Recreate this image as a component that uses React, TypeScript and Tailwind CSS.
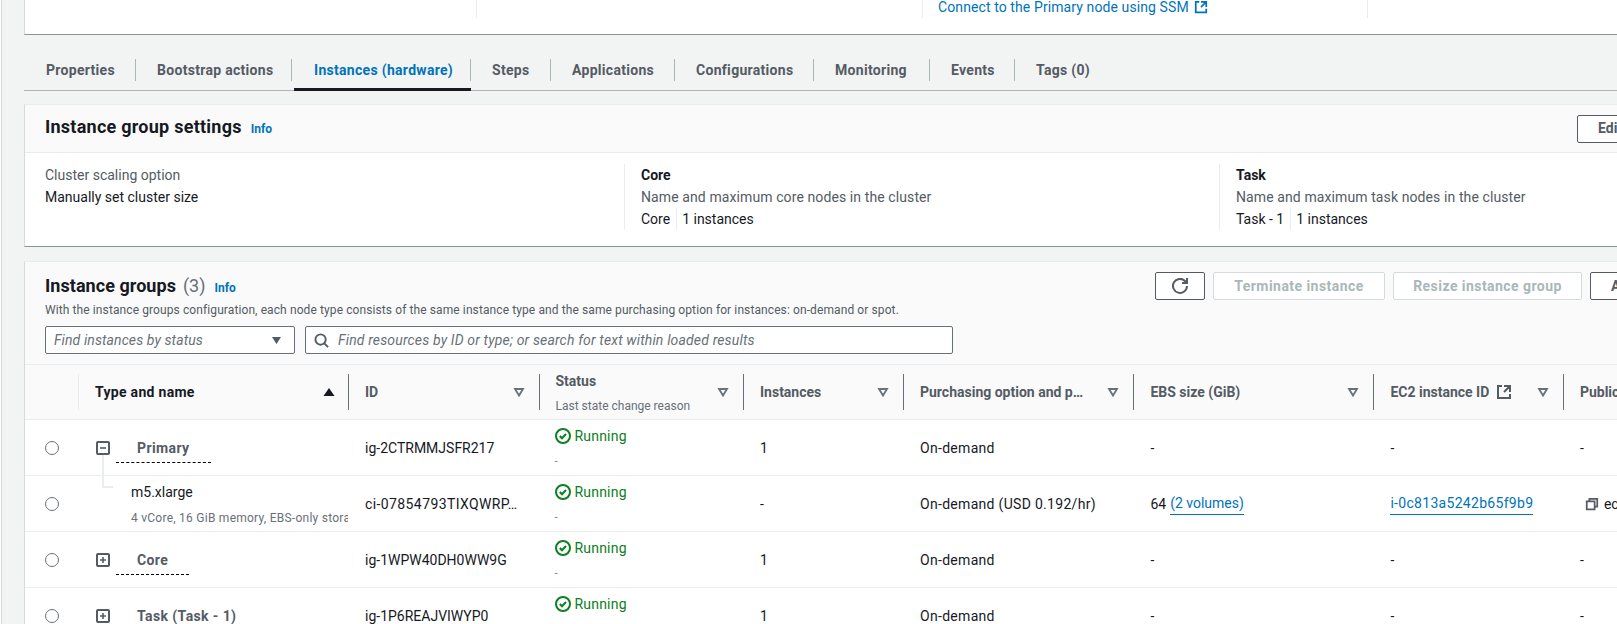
const External = ({ className = "" }: { className?: string }) => (
  <svg viewBox="0 0 16 16" fill="none" stroke="currentColor" strokeWidth="2" className={className}>
    <path d="M14 8.01v-6H8M14.02 2 8 8.01M6 2.01H2v12h12v-3.99" />
  </svg>
);
const SortIcon = () => (
  <svg viewBox="0 0 12 12" className="w-[12px] h-[12px] shrink-0 text-[#687078]" fill="none" stroke="currentColor" strokeWidth="1.8">
    <path d="M2 3h8L6 9.5z" />
  </svg>
);
const Head = ({ children, sub }: { children: React.ReactNode; sub?: string }) => (
  <div className="flex items-center h-[36px] border-l border-[#687078] pl-[16px] pr-[14px] justify-between">
    <div className="flex flex-col whitespace-nowrap">
      <div className="text-[14px] leading-[22px] font-bold text-[#545b64] flex items-center">{children}</div>
      {sub && <div className="text-[12px] leading-[16px] text-[#687078] mt-[6px]">{sub}</div>}
    </div>
    <SortIcon />
  </div>
);
const Radio = () => <div className="w-[14px] h-[14px] rounded-full border border-[#687078] bg-white" />;
const Running = () => (
  <div className="pl-[16px] pt-[5px]">
    <div className="flex items-center gap-[4px] h-[22px] text-[#0a8020] text-[14px] tracking-[0.2px]">
      <svg viewBox="0 0 16 16" className="w-[16px] h-[16px]" fill="none" stroke="currentColor" strokeWidth="2">
        <circle cx="8" cy="8" r="7" />
        <path d="M4.8 8l2.2 2.2 4-4.2" />
      </svg>
      <span>Running</span>
    </div>
    <div className="text-[12px] leading-[16px] text-[#879596] mt-[6px]">-</div>
  </div>
);
const Expand = ({ open }: { open?: boolean }) => (
  <svg viewBox="0 0 14 14" className="w-[14px] h-[14px] shrink-0 text-[#545b64]" fill="none" stroke="currentColor" strokeWidth="2">
    <rect x="1" y="1" width="12" height="12" rx="1" />
    <path d={open ? "M4 7h6" : "M4 7h6M7 4v6"} strokeWidth="1.6" />
  </svg>
);
const Name = ({ children, line = true }: { children: string; line?: boolean }) => (
  <div className={`text-[14px] leading-[22px] font-bold tracking-[0.4px] text-[#545b64] px-[21px] pb-[3px] w-fit whitespace-nowrap ${line ? "border-b border-dashed border-black" : ""}`}>
    {children}
  </div>
);
const Cell = ({ children }: { children: React.ReactNode }) => (
  <div className="flex items-center pl-[17px] pt-[1px] whitespace-nowrap text-[14px] text-[#16191f] overflow-hidden">{children}</div>
);
const rows = [
  { name: "Primary", id: "ig-2CTRMMJSFR217", open: true, line: true },
  { name: "Core", id: "ig-1WPW40DH0WW9G", open: false, line: true },
  { name: "Task (Task - 1)", id: "ig-1P6REAJVIWYP0", open: false, line: false },
];
const tabs = [
  ["Properties", "w-[112px] pl-px", false],
  ["Bootstrap actions", "w-[156px]", false],
  ["Instances (hardware)", "w-[177px] ml-[2px]", true],
  ["Steps", "w-[80px]", false],
  ["Applications", "w-[124px]", false],
  ["Configurations", "w-[139px]", false],
  ["Monitoring", "w-[116px]", false],
  ["Events", "w-[85px]", false],
  ["Tags (0)", "w-[100px]", false],
] as const;
const gridCols = "grid grid-cols-[53px_270px_190.5px_204.5px_160px_230.4px_240px_189.5px_200px]";

const GroupRow = ({ r }: { r: (typeof rows)[number] }) => (
  <div className={`${gridCols} h-[56px] border-b border-[#eaeded] bg-white`}>
    <div className="flex items-center pl-[20px]"><Radio /></div>
    <div className="relative flex items-start pl-[18px] pt-[21px]">
      <Expand open={r.open} />
      <div className="ml-[6px] -mt-[4px]"><Name line={r.line}>{r.name}</Name></div>
      {r.open && <div className="absolute left-[24px] top-[35px] h-[33px] w-[11px] border-l-2 border-b-2 border-[#eaeded] rounded-bl-[2px]" />}
    </div>
    <Cell>{r.id}</Cell>
    <Running />
    <Cell>1</Cell>
    <Cell><span className="tracking-[0.3px]">On-demand</span></Cell>
    <Cell>-</Cell>
    <Cell>-</Cell>
    <Cell>-</Cell>
  </div>
);

export default function App() {
  return (
    <div className="h-[624px] w-[1617px] overflow-hidden bg-white pl-px [font-family:Roboto,sans-serif] text-[#16191f]">
      <div className="h-[624px] w-[1640px] bg-[#f2f3f3] border-l border-[#d5dbdb] pl-[22px]">
        {/* top card */}
        <div className="h-[35px] w-[1620px] bg-white border-b border-[#879596] border-l-[#d5dbdb] border-l grid grid-cols-[451px_446px_445px_278px]">
          <div />
          <div className="h-[18px] border-l border-[#eaeded]" />
          <div className="h-[18px] border-l border-[#eaeded] pl-[15px]">
            <div className="flex items-center gap-[5px] h-[14px] text-[14px] tracking-[0.1px] text-[#0073bb] whitespace-nowrap">
              Connect to the Primary node using SSM
              <External className="w-[14px] h-[14px]" />
            </div>
          </div>
          <div className="h-[18px] border-l border-[#eaeded]" />
        </div>

        {/* tabs */}
        <div className="mt-[20px] h-[36px] w-[1620px] border-b border-[#aab7b8] flex">
          {tabs.map(([label, w, active]) => (
            <div key={label} className={`${w} h-[36px] pt-[4px] ${active ? "border-b-[3px] border-[#16191f]" : ""}`}>
              <div className={`h-[22px] flex items-center whitespace-nowrap text-[14px] font-bold tracking-[0.3px] ${active ? "pl-[20px]" : "pl-[21px]"} ${label === "Tags (0)" ? "" : "border-r border-[#aab7b8]"} ${active ? "text-[#0073bb]" : "text-[#545b64]"}`}>
                {label}
              </div>
            </div>
          ))}
        </div>

        {/* settings card */}
        <div className="mt-[13px] h-[143px] w-[1620px] bg-white border-l border-[#d5dbdb] border-b border-b-[#879596] border-t border-t-[#eaeded]">
          <div className="h-[48px] bg-[#fafafa] border-b border-[#eaeded] flex items-center pl-[20px]">
            <div className="text-[18px] font-bold tracking-[0.25px] w-[1532px] flex items-baseline pb-[4px]">
              Instance group settings
              <span className="text-[12px] tracking-normal text-[#0073bb] ml-[9px]">Info</span>
            </div>
            <div className="h-[28px] w-[60px] border border-[#545b64] rounded-[2px] bg-white text-[14px] font-bold text-[#545b64] pl-[20px] flex items-center">Edit</div>
          </div>
          <div className="grid grid-cols-[599px_595px_1fr] pt-[11px] text-[14px] leading-[22px]">
            <div className="pl-[20px] h-[66px]">
              <div className="text-[#545b64]">Cluster scaling option</div>
              <div>Manually set cluster size</div>
            </div>
            <div className="pl-[16px] h-[66px] border-l border-[#eaeded]">
              <div className="font-bold">Core</div>
              <div className="text-[#545b64] tracking-[0.1px]">Name and maximum core nodes in the cluster</div>
              <div className="flex"><span className="pr-[6px] border-r border-[#eaeded]">Core</span><span className="pl-[5px]">1 instances</span></div>
            </div>
            <div className="pl-[16px] h-[66px] border-l border-[#eaeded]">
              <div className="font-bold">Task</div>
              <div className="text-[#545b64] tracking-[0.1px]">Name and maximum task nodes in the cluster</div>
              <div className="flex"><span className="pr-[6px] border-r border-[#eaeded]">Task - 1</span><span className="pl-[5px]">1 instances</span></div>
            </div>
          </div>
        </div>

        {/* instance groups */}
        <div className="mt-[14px] w-[1620px] border-l border-[#d5dbdb] border-t border-t-[#eaeded]">
          <div className="bg-[#fafafa] h-[102px] pt-[10px] pl-[20px]">
            <div className="flex h-[28px]">
              <div className="w-[1110px] shrink-0 flex items-baseline">
                <span className="text-[18px] font-bold tracking-[0.05px]">Instance groups</span>
                <span className="text-[18px] text-[#687078] ml-[7px]">(3)</span>
                <span className="text-[12px] font-bold text-[#0073bb] ml-[9px]">Info</span>
              </div>
              <div className="flex gap-[8px] shrink-0">
                <div className="w-[50px] h-[28px] bg-white border border-[#545b64] rounded-[2px] flex items-center justify-center text-[#545b64]">
                  <svg viewBox="0 0 16 16" className="w-[16px] h-[16px]" fill="none" stroke="currentColor" strokeWidth="2">
                    <path d="M10 5h5V0" />
                    <path d="M15 8a7 7 0 1 1-2-5l2 2" />
                  </svg>
                </div>
                <div className="w-[172px] h-[28px] bg-white border border-[#d5dbdb] rounded-[2px] flex items-center justify-center text-[14px] font-bold tracking-[0.45px] text-[#aab7b8] whitespace-nowrap">Terminate instance</div>
                <div className="w-[189px] h-[28px] bg-white border border-[#d5dbdb] rounded-[2px] flex items-center justify-center text-[14px] font-bold tracking-[0.45px] text-[#aab7b8] whitespace-nowrap">Resize instance group</div>
                <div className="w-[80px] h-[28px] bg-white border border-[#545b64] rounded-[2px] flex items-center pl-[20px] text-[14px] font-bold text-[#545b64]">Actions</div>
              </div>
            </div>
            <div className="text-[12px] leading-[16px] tracking-[0.1px] text-[#545b64] mt-[2px] whitespace-nowrap">
              With the instance groups configuration, each node type consists of the same instance type and the same purchasing option for instances: on-demand or spot.
            </div>
            <div className="flex gap-[10px] mt-[8px]">
              <div className="w-[250px] h-[28px] bg-white border border-[#687078] rounded-[2px] flex items-center justify-between pl-[8px] pr-[12px] text-[14px] tracking-[0.1px] italic text-[#687078]">
                Find instances by status
                <svg viewBox="0 0 12 10" className="w-[11px] h-[9px] text-[#545b64]" fill="currentColor"><path d="M1 1h10L6 9z" /></svg>
              </div>
              <div className="w-[648px] h-[28px] bg-white border border-[#687078] rounded-[2px] flex items-center pl-[8px] text-[14px] tracking-[0.16px] italic text-[#687078]">
                <svg viewBox="0 0 16 16" className="w-[15px] h-[15px] text-[#545b64] mr-[9px]" fill="none" stroke="currentColor" strokeWidth="2"><circle cx="7" cy="7" r="5.5" /><path d="M11 11l4 4" /></svg>
                Find resources by ID or type; or search for text within loaded results
              </div>
            </div>
          </div>

          {/* header */}
          <div className={`${gridCols} h-[56px] items-center bg-[#fafafa] border-t border-b border-[#eaeded]`}>
            <div />
            <div className="flex items-center h-[36px] border-l border-[#eaeded] pl-[16px] pr-[13px] justify-between">
              <span className="text-[14px] font-bold tracking-[0.3px] text-[#16191f]">Type and name</span>
              <svg viewBox="0 0 12 12" className="w-[12px] h-[12px] text-[#16191f]" fill="currentColor"><path d="M6 2l5.5 8H.5z" /></svg>
            </div>
            <Head>ID</Head>
            <Head sub="Last state change reason">Status</Head>
            <Head>Instances</Head>
            <Head>Purchasing option and p…</Head>
            <Head>EBS size (GiB)</Head>
            <Head>EC2 instance ID<External className="w-[16px] h-[16px] ml-[7px]" /></Head>
            <Head>Public IPv4</Head>
          </div>

          {/* rows */}
          <GroupRow r={rows[0]} />
          <div className={`${gridCols} h-[56px] border-b border-[#eaeded] bg-white`}>
            <div className="flex items-center pl-[20px]"><Radio /></div>
            <div className="pl-[53px] pt-[5px] overflow-hidden whitespace-nowrap">
              <div className="text-[14px] leading-[22px]">m5.xlarge</div>
              <div className="text-[12px] leading-[16px] tracking-[0.25px] mt-[7px] text-[#687078]">4 vCore, 16 GiB memory, EBS-only storage</div>
            </div>
            <Cell><span className="tracking-[0.4px]">ci-07854793TIXQWRP…</span></Cell>
            <Running />
            <Cell>-</Cell>
            <Cell><span className="tracking-[0.3px]">On-demand (USD 0.192/hr)</span></Cell>
            <Cell>64<span className="ml-[4px] text-[#0073bb] border-b border-[#0073bb]">(2 volumes)</span></Cell>
            <Cell><span className="tracking-[0.3px] text-[#0073bb] border-b border-[#0073bb]">i-0c813a5242b65f9b9</span></Cell>
            <Cell>
              <svg viewBox="0 0 16 16" className="w-[14px] h-[14px] ml-[5px] mr-[5px] text-[#545b64]" fill="none" stroke="currentColor" strokeWidth="2"><path d="M2 5h9v9H2z" /><path d="M5 5V2h9v9h-3" /></svg>
              ec2-3-91-0-1.compute
            </Cell>
          </div>
          <GroupRow r={rows[1]} />
          <GroupRow r={rows[2]} />
        </div>
      </div>
    </div>
  );
}
